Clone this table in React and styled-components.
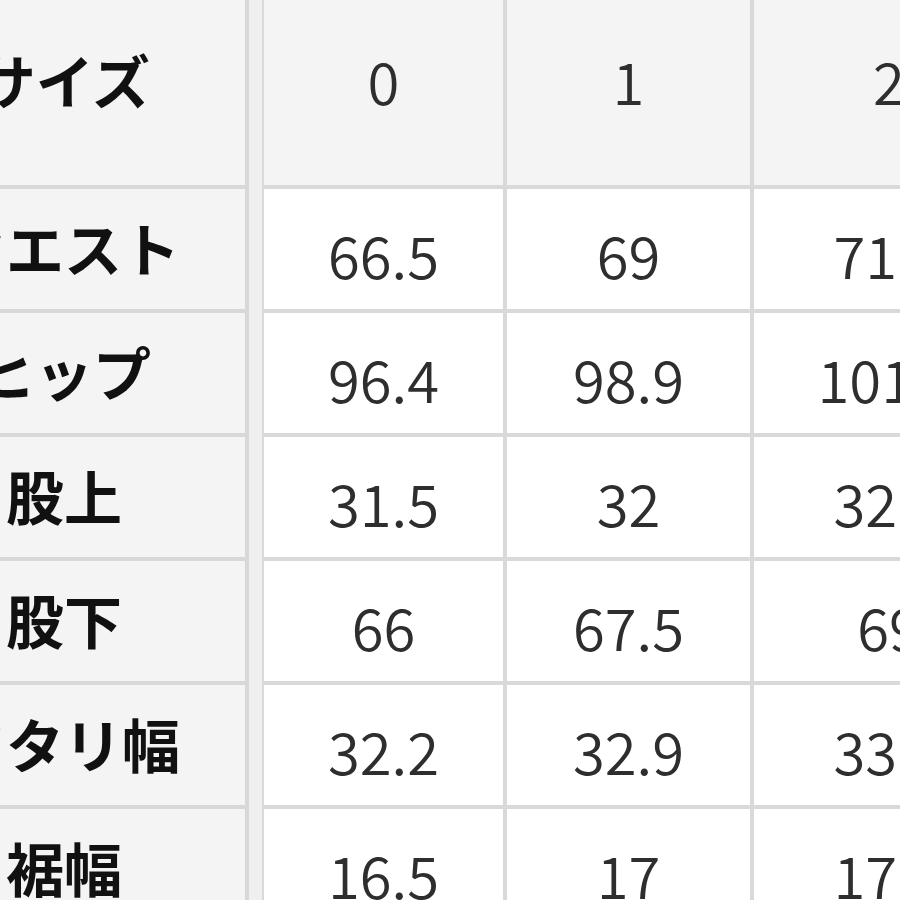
import styled, { createGlobalStyle } from 'styled-components'

const GlobalStyle = createGlobalStyle`
  html, body {
    margin: 0;
    padding: 0;
    background-color: #efefef;
    overflow: hidden;
  }
`

const Page = styled.div`
  width: 900px;
  height: 900px;
  overflow: hidden;
  background-color: #efefef;
`

const Tables = styled.div`
  display: flex;
  gap: 13px;
  margin-left: -117px;
  margin-top: -15px;
  width: max-content;
`

const LabelTable = styled.div`
  display: grid;
  grid-template-columns: 362px;
  grid-template-rows: 200px repeat(6, 120px);
  row-gap: 4px;
  padding-right: 4px;
  background-color: #d8d8d8;
`

const ValueTable = styled.div`
  display: grid;
  grid-template-columns: 239px 243px 270px;
  grid-template-rows: 200px repeat(6, 120px);
  gap: 4px;
  padding-left: 2px;
  background-color: #d9d9d9;
`

const LabelCell = styled.div`
  display: flex;
  align-items: center;
  justify-content: center;
  background-color: #f4f4f4;
  font-family: 'Noto Sans CJK JP', sans-serif;
  font-weight: 700;
  font-size: 58px;
  color: #111;
  line-height: 1;
  box-sizing: border-box;
  padding-bottom: ${(p) => (p.$head ? '12px' : '4px')};
`

const ValueCell = styled.div`
  display: flex;
  align-items: center;
  justify-content: center;
  background-color: ${(p) => (p.$head ? '#f4f4f4' : '#ffffff')};
  font-family: 'Noto Sans CJK JP', sans-serif;
  font-weight: 350;
  font-size: 58px;
  color: #2e2e2e;
  line-height: 1;
  padding-top: ${(p) => (p.$head ? '0' : '10px')};
  padding-bottom: ${(p) => (p.$head ? '10px' : '0')};
  box-sizing: border-box;
`

const sizes = ['0', '1', '2']

const rows = [
  { label: 'ウエスト', values: ['66.5', '69', '71.5'] },
  { label: 'ヒップ', values: ['96.4', '98.9', '101.4'] },
  { label: '股上', values: ['31.5', '32', '32.5'] },
  { label: '股下', values: ['66', '67.5', '69'] },
  { label: 'ワタリ幅', values: ['32.2', '32.9', '33.6'] },
  { label: '裾幅', values: ['16.5', '17', '17.5'] },
]

const App = () => {
  return (
    <Page>
      <GlobalStyle />
      <Tables>
        <LabelTable>
          <LabelCell $head>サイズ</LabelCell>
          {rows.map((r) => (
            <LabelCell key={r.label}>{r.label}</LabelCell>
          ))}
        </LabelTable>
        <ValueTable>
          {sizes.map((s) => (
            <ValueCell key={s} $head>
              {s}
            </ValueCell>
          ))}
          {rows.map((r) =>
            r.values.map((v, i) => <ValueCell key={r.label + i}>{v}</ValueCell>),
          )}
        </ValueTable>
      </Tables>
    </Page>
  )
}

export default App
